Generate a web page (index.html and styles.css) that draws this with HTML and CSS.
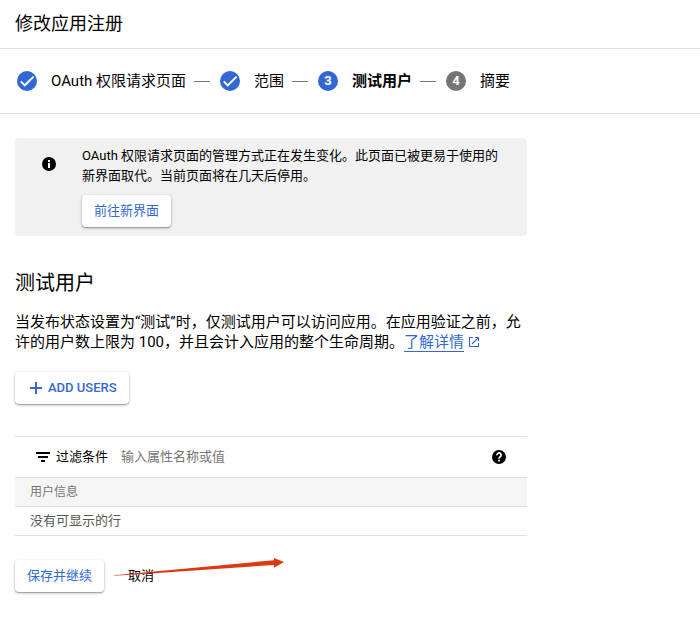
FILE: index.html
```html
<!DOCTYPE html>
<html lang="zh-CN">
<head>
    <meta charset="UTF-8">
    <meta name="viewport" content="width=device-width, initial-scale=1.0">
    <title>修改应用注册</title>
    <link rel="stylesheet" href="styles.css">
</head>
<body>
    <header class="page-header">
        <h1>修改应用注册</h1>
    </header>

    <!-- Steps -->
    <ol class="stepper">
        <li class="step">
            <span class="step-icon"><svg viewBox="0 0 20 20" width="20" height="20"><path d="M3.8 10.3l4 4L16.6 5.6" fill="none" stroke="#fff" stroke-width="1.9"/></svg></span>
            <span class="step-label">OAuth 权限请求页面</span>
        </li>
        <li class="step">
            <span class="step-icon"><svg viewBox="0 0 20 20" width="20" height="20"><path d="M3.8 10.3l4 4L16.6 5.6" fill="none" stroke="#fff" stroke-width="1.9"/></svg></span>
            <span class="step-label">范围</span>
        </li>
        <li class="step current">
            <span class="step-icon">3</span>
            <span class="step-label">测试用户</span>
        </li>
        <li class="step pending">
            <span class="step-icon">4</span>
            <span class="step-label">摘要</span>
        </li>
    </ol>

    <main class="content">
        <!-- Notice -->
        <section class="notice">
            <svg class="notice-icon" viewBox="0 0 14 14" width="14" height="14">
                <circle cx="7" cy="7" r="7"/>
                <path d="M6 3h2v2H6zM6 6h2v5H6z" fill="#fff"/>
            </svg>
            <div class="notice-body">
                <p>OAuth 权限请求页面的管理方式正在发生变化。此页面已被更易于使用的新界面取代。当前页面将在几天后停用。</p>
                <button type="button" class="button">前往新界面</button>
            </div>
        </section>

        <h2>测试用户</h2>
        <p class="description">当发布状态设置为“测试”时，仅测试用户可以访问应用。在应用验证之前，允许的用户数上限为 100，并且会计入应用的整个生命周期。<a href="#" class="link"><span>了解详情</span><svg viewBox="0 0 12 12" width="12" height="12"><path d="M5 1.5H1.5v9h9V7M7 1.5h3.5V5M10.5 1.5L4 8" fill="none" stroke="currentColor" stroke-width="1.1"/></svg></a></p>

        <button type="button" class="button add-button">
            <svg viewBox="0 0 12 12" width="12" height="12"><path d="M5 0h2v5h5v2H7v5H5V7H0V5h5z" fill="currentColor"/></svg>
            ADD USERS
        </button>

        <!-- Users table -->
        <section class="users">
            <div class="filter">
                <label for="filter-input">
                    <svg viewBox="0 0 14 10" width="14" height="10"><path d="M0 0h14v2H0zM2 4h10v2H2zM5 8h4v2H5z"/></svg>
                    过滤条件
                </label>
                <input type="text" id="filter-input" placeholder="输入属性名称或值">
                <button type="button" class="help" aria-label="帮助">
                    <svg viewBox="0 0 14 14" width="14" height="14">
                        <circle cx="7" cy="7" r="7"/>
                        <path d="M4.9 5.2a2.1 2.1 0 1 1 3.4 1.5C7.5 7.3 7 7.6 7 8.8" fill="none" stroke="#fff" stroke-width="1.7"/>
                        <path d="M6.1 9.8h1.8v1.7H6.1z" fill="#fff"/>
                    </svg>
                </button>
            </div>
            <table>
                <thead>
                    <tr><th>用户信息</th></tr>
                </thead>
                <tbody>
                    <tr><td>没有可显示的行</td></tr>
                </tbody>
            </table>
        </section>

        <div class="actions">
            <button type="button" class="button">保存并继续</button>
            <button type="button" class="cancel">取消</button>
            <svg class="arrow" viewBox="0 0 172 18" width="172" height="18"><path d="M0 17.2L160 2.2V0L170 3.9 160 9.8V7L40 15.2 0 17.8z" fill="#dc3912"/></svg>
        </div>
    </main>
</body>
</html>
```

FILE: styles.css
```css
* {
    box-sizing: border-box;
}

body {
    margin: 0;
    background-color: #fff;
    font-family: Roboto, 'Noto Sans CJK SC', sans-serif;
    font-size: 13px;
    line-height: 20px;
    color: #000;
}

h1, h2, p {
    margin: 0;
    font-weight: 400;
}

svg {
    display: block;
    flex: none;
}

button, input {
    font-family: inherit;
    font-size: 13px;
    line-height: 20px;
}

.page-header {
    padding: 12px 15px;
    border-bottom: 1px solid #e0e0e0;
}

h1 {
    font-size: 18px;
    line-height: 24px;
}

.stepper {
    display: flex;
    align-items: center;
    margin: 0;
    padding: 22px 17px;
    border-bottom: 1px solid #e0e0e0;
    list-style: none;
    font-size: 15px;
}

.step {
    display: flex;
    align-items: center;
    white-space: nowrap;
}

.step:not(:last-child)::after {
    content: '';
    width: 16px;
    height: 1px;
    margin: 0 10px 0 8px;
    background-color: #757575;
}

.step-icon {
    width: 20px;
    height: 20px;
    margin-right: 14px;
    border-radius: 50%;
    background-color: #3367d6;
    color: #fff;
    font-size: 13px;
    font-weight: 700;
    text-align: center;
}

.current .step-label {
    font-weight: 700;
}

.pending .step-icon {
    background-color: #757575;
}

.content {
    max-width: 542px;
    padding: 24px 15px;
}

.notice {
    display: flex;
    gap: 26px;
    padding: 8px 24px 9px 27px;
    border-radius: 4px;
    background-color: #f1f1f1;
}

.notice-icon {
    margin-top: 11px;
}

.button {
    display: inline-flex;
    align-items: center;
    height: 32px;
    padding: 0 12px;
    border: none;
    border-radius: 4px;
    background-color: #fff;
    box-shadow: 0 1px 3px rgba(0, 0, 0, 0.3), 0 1px 1px rgba(0, 0, 0, 0.2);
    color: #3367d6;
    cursor: pointer;
}

.notice .button {
    margin-top: 9px;
}

h2 {
    margin-top: 35px;
    font-size: 20px;
    line-height: 24px;
}

.description {
    margin-top: 17px;
    font-size: 15px;
}

.link {
    color: #3367d6;
    text-decoration: none;
}

.link span {
    text-decoration: underline;
    text-decoration-thickness: 1px;
    text-underline-offset: 4px;
}

.link svg {
    display: inline-block;
    margin-left: 4px;
    vertical-align: -1px;
}

.add-button {
    gap: 6px;
    margin-top: 20px;
    padding: 0 12px 0 15px;
    font-weight: 500;
}

.users {
    margin-top: 32px;
    border-top: 1px solid #e0e0e0;
}

.filter {
    display: flex;
    align-items: center;
    height: 40px;
    padding: 0 21px;
}

.filter label {
    display: flex;
    align-items: center;
    gap: 6px;
}

.filter input {
    flex: 1;
    min-width: 0;
    margin-left: 13px;
    padding: 0;
    border: none;
    outline: none;
}

.filter input::placeholder {
    color: #757575;
}

.help {
    padding: 0;
    border: none;
    background: none;
    cursor: pointer;
}

table {
    width: 100%;
    border-collapse: separate;
    border-spacing: 0;
}

th, td {
    height: 29px;
    padding: 0 15px;
    border-bottom: 1px solid #e0e0e0;
    text-align: left;
    color: #555;
}

th {
    height: 30px;
    border-top: 1px solid #e0e0e0;
    background-color: #f5f5f5;
    font-size: 12px;
    font-weight: 400;
    color: #757575;
}

.actions {
    display: flex;
    align-items: center;
    position: relative;
    margin-top: 24px;
}

.cancel {
    margin-left: 12px;
    padding: 0 12px;
    border: none;
    background: none;
    color: #000;
    cursor: pointer;
}

/* Arrow drawn over the cancel button */
.arrow {
    position: absolute;
    top: -2px;
    left: 99px;
    pointer-events: none;
}
```
